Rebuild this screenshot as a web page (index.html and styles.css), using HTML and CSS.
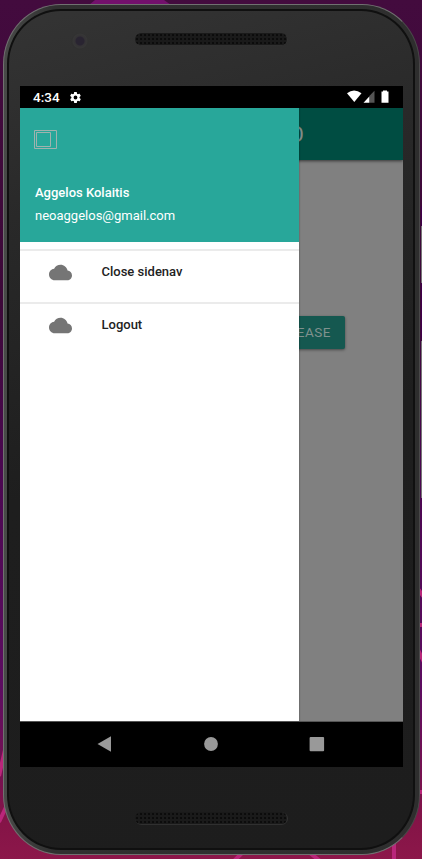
FILE: index.html
```
<!DOCTYPE html>
<html lang="en">
<head>
<meta charset="utf-8">
<title>Sidenav</title>
<link rel="stylesheet" href="styles.css">
</head>
<body>
<svg class="wallpaper" viewBox="0 0 422 859" aria-hidden="true">
  <path d="M89 5L95 0H164L171 5Z" fill="#73106c"/>
  <path d="M421 226h1v57h-1zM421 341h1v157h-1z" fill="#777477"/>
  <path d="M421 206h1v20h-1zM421 283h1v55h-1z" fill="#400049"/>
  <g fill="none" stroke="#b9267a" stroke-width="4">
    <path d="M-1 776L5 750M-1 822L7 805M234 861L242 853M310 853L320 861M394 861V842M418 589L424 597M418 625H424M418 650L424 662M418 792H424"/>
  </g>
</svg>
<div class="phone">
  <div class="face">
    <div class="bezel bezel-top">
      <span class="camera"></span>
      <span class="speaker"></span>
    </div>
    <div class="screen">
      <div class="status">
        <span class="clock">4:34</span>
        <svg class="gear" viewBox="0 0 24 24"><path fill="#fff" fill-rule="evenodd" d="M19.4 13c.1-.3.1-.7.1-1s0-.7-.1-1l2.100-1.600c.2-.2.3-.5.1-.7l-2-3.500c-.1-.2-.4-.3-.6-.2l-2.500 1c-.5-.4-1.100-.7-1.700-1l-.4-2.600c0-.2-.2-.4-.5-.4h-4c-.3 0-.5.200-.5.400l-.4 2.600c-.6.300-1.200.6-1.700 1l-2.500-1c-.2-.1-.5 0-.6.200l-2 3.500c-.1.200-.1.500.1.700L4.500 11c0 .3-.1.700-.1 1s0 .7.1 1l-2.100 1.600c-.2.200-.3.500-.1.700l2 3.500c.1.200.4.300.6.200l2.500-1c.5.400 1.100.7 1.700 1l.4 2.600c0 .2.200.4.500.4h4c.3 0 .5-.2.500-.4l.4-2.600c.6-.3 1.200-.6 1.700-1l2.500 1c.2.100.5 0 .6-.2l2-3.500c.1-.2.1-.5-.1-.7zM12 15.500a3.500 3.500 0 1 1 0-7 3.500 3.500 0 0 1 0 7z"/></svg>
        <svg class="signals" viewBox="0 0 42 14"><path fill="#fff" d="M0 3.300Q7-2.300 14.500 3.300L7.300 12Z"/><path fill="#555" d="M22.300 6L27.500.8V12.700H22.300Z"/><path fill="#fff" d="M16.500 12.700L22.300 6.500V12.700ZM36 .5H40V1.500H41.500V12.700H34.500V1.500H36Z"/></svg>
      </div>
      <div class="app">
        <div class="page">
          <div class="toolbar"><span>O</span></div>
          <div class="page-body"><div class="button">PLEASE</div></div>
        </div>
        <div class="drawer">
          <div class="profile">
            <svg class="avatar" viewBox="0 0 24 20"><g fill="none" stroke="#9fb3ae"><path d="M.5 1.500H22.500V19.500H.5Z"/><path d="M2.500 3.500H16.500V17.500H2.500Z"/></g></svg>
            <div class="name">Aggelos Kolaitis</div>
            <div class="email">neoaggelos@gmail.com</div>
          </div>
          <div class="menu">
            <div class="item">
              <svg class="cloud" viewBox="0 0 24 24"><path d="M19.350 10.040C18.670 6.590 15.640 4 12 4 9.110 4 6.600 5.640 5.350 8.040 2.340 8.360 0 10.910 0 14c0 3.310 2.690 6 6 6h13c2.760 0 5-2.240 5-5 0-2.640-2.050-4.780-4.650-4.960z"/></svg>
              <span>Close sidenav</span>
            </div>
            <div class="item">
              <svg class="cloud" viewBox="0 0 24 24"><path d="M19.350 10.040C18.670 6.590 15.640 4 12 4 9.110 4 6.600 5.640 5.350 8.040 2.340 8.360 0 10.910 0 14c0 3.310 2.690 6 6 6h13c2.760 0 5-2.240 5-5 0-2.640-2.050-4.780-4.650-4.960z"/></svg>
              <span>Logout</span>
            </div>
          </div>
        </div>
      </div>
      <div class="navbar">
        <svg viewBox="0 0 16 16"><path d="M.5 8L14 .2V15.800Z"/></svg>
        <svg viewBox="0 0 16 16"><circle cx="8" cy="8" r="6.900"/></svg>
        <svg viewBox="0 0 16 16"><rect x=".6" y=".9" width="14.500" height="14.400" rx="1"/></svg>
      </div>
    </div>
    <div class="bezel bezel-bottom"><span class="speaker"></span></div>
  </div>
</div>
</body>
</html>
```

FILE: styles.css
```
* { box-sizing: border-box; }
body {
  margin: 0;
  width: 422px;
  height: 859px;
  overflow: hidden;
  padding: 4px 1px 4px 3px;
  position: relative;
  font-family: Roboto, sans-serif;
  background: linear-gradient(180deg, #430b3e 0, #3c0838 35%, #4a0750 55%, #5c0c60 80%, #851447 96%, #8c174a 100%);
}
.wallpaper { position: absolute; left: 0; top: 0; width: 422px; height: 859px; }
.phone {
  position: relative;
  width: 417px;
  height: 851px;
  padding: 4px 4px 4px 3px;
  border-radius: 58px / 60px;
  border: 1px solid #707070;
  border-right-color: #484848;
  background: linear-gradient(90deg, #484a48, #303030 12%, #2e2e2e);
}
.face {
  height: 100%;
  border: 2px solid #101010;
  border-radius: 54px / 55px;
  background: linear-gradient(165deg, #343434 0, #292929 22%, #1e1e1e 52%, #1d1d1d 100%);
  padding: 0 9px 0 11px;
}
.bezel { display: flex; position: relative; }
.bezel-top { height: 75px; padding: 22px 0 0 51px; }
.bezel-bottom { height: 76px; padding: 45px 0 0 115px; }
.camera {
  width: 17px;
  height: 17px;
  margin-right: 47px;
  border-radius: 50%;
  background: radial-gradient(circle at 9px 8px, #292431 0 4px, #343235 5px, #363636 7px, #303030 8px);
}
.speaker {
  width: 153px;
  height: 13px;
  border-radius: 7px;
  border-right: 1px solid #333;
  border-bottom: 1px solid #303030;
  background-color: #1a1a1a;
  background-image: radial-gradient(circle, #0c0c0c 0 .7px, transparent 1.2px);
  background-size: 4px 4px;
}
.screen { width: 383px; height: 681px; background: #000; }
.status { height: 22px; display: flex; align-items: center; padding: 0 14px 0 13px; color: #fff; }
.clock { font-size: 13.500px; font-weight: 500; line-height: 23px; height: 22px; width: 36px; }
.gear { width: 13px; height: 13px; }
.signals { width: 42px; height: 14px; margin-left: auto; }
.app { height: 614px; position: relative; overflow: hidden; border-bottom: 1px solid #555; }
.page { height: 100%; background: #808080; }
.toolbar {
  height: 52px;
  background: #004d42;
  padding-right: 99px;
  text-align: right;
  color: #808b88;
  font-size: 22px;
  line-height: 53px;
  box-shadow: 0 1px 3px rgba(0,0,0,.6);
}
.page-body { display: flex; justify-content: center; padding-top: 156px; }
.button {
  width: 267px;
  height: 33px;
  border-radius: 2px;
  padding-right: 14px;
  background: #155850;
  color: #80918e;
  font-size: 13.500px;
  line-height: 32px;
  letter-spacing: .5px;
  text-align: right;
  box-shadow: 0 1px 3px rgba(0,0,0,.45);
}
.drawer {
  position: absolute;
  left: 0;
  top: 0;
  width: 279px;
  height: 614px;
  background: #fff;
  box-shadow: 0 0 2px rgba(0,0,0,.4);
}
.profile { height: 134px; padding: 21px 14px 0; background: #28a79a; color: #fff; }
.avatar { display: block; width: 24px; height: 20px; margin-bottom: 33px; }
.name, .email { font-size: 13px; line-height: 22px; padding-left: 1px; }
.email { line-height: 23px; }
.name { font-weight: 500; }
.menu { padding-top: 7px; }
.item {
  height: 53px;
  border-top: 2px solid #ebebeb;
  display: flex;
  align-items: flex-start;
  padding: 10px 0 0 29px;
  color: #222;
  font-size: 13px;
  font-weight: 500;
  line-height: 22px;
}
.cloud { width: 23px; height: 23px; margin-right: 29.500px; fill: #757575; }
.navbar { height: 45px; padding: 0 78px 1px 77px; display: flex; align-items: center; justify-content: space-between; }
.navbar svg { width: 16px; height: 16px; fill: #999; }
```
